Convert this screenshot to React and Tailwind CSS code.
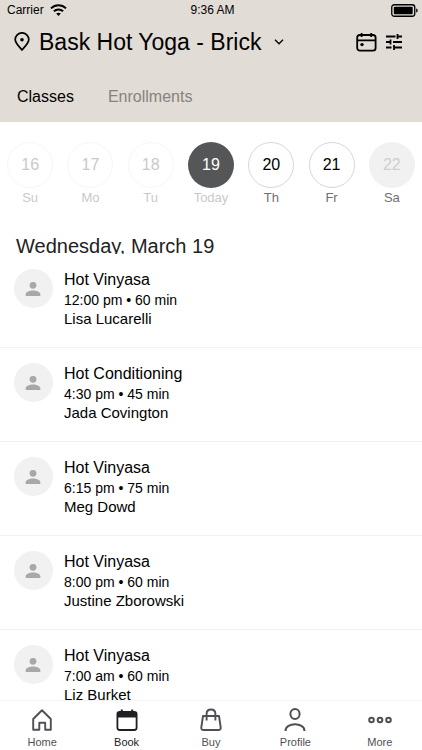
import { useState } from "react";

const days = [
  { date: 16, label: "Su", state: "past" },
  { date: 17, label: "Mo", state: "past" },
  { date: 18, label: "Tu", state: "past" },
  { date: 19, label: "Today", state: "today" },
  { date: 20, label: "Th", state: "open" },
  { date: 21, label: "Fr", state: "open" },
  { date: 22, label: "Sa", state: "closed" },
];

const circleStyles = {
  past: "border border-[#f6f6f6] text-[#c9c9c9]",
  today: "bg-[#555658] text-white font-medium",
  open: "border border-[#d6d6d6] text-black font-medium",
  closed: "bg-[#f1f1f1] text-[#cfcfcf]",
};

const labelStyles = {
  past: "text-[#c9c9c9]",
  today: "text-[#c9c9c9]",
  open: "text-[#6f6f6f]",
  closed: "text-[#6f6f6f]",
};

const classes = [
  { name: "Hot Vinyasa", time: "12:00 pm", length: "60 min", teacher: "Lisa Lucarelli" },
  { name: "Hot Conditioning", time: "4:30 pm", length: "45 min", teacher: "Jada Covington" },
  { name: "Hot Vinyasa", time: "6:15 pm", length: "75 min", teacher: "Meg Dowd" },
  { name: "Hot Vinyasa", time: "8:00 pm", length: "60 min", teacher: "Justine Zborowski" },
  { name: "Hot Vinyasa", time: "7:00 am", length: "60 min", teacher: "Liz Burket" },
];

const WifiIcon = () => (
  <svg width="17" height="12" viewBox="0 0 17 12" fill="none" stroke="black" strokeWidth="2">
    <path d="M1 4.4C5.2.3 11.8.3 16 4.4" />
    <path d="M3.9 7.3c2.6-2.5 6.6-2.5 9.2 0" />
    <path d="M8.5 12 6.2 9.6c1.3-1.2 3.3-1.2 4.6 0z" fill="black" stroke="none" />
  </svg>
);

const BatteryIcon = () => (
  <svg width="27" height="13" viewBox="0 0 27 13">
    <rect x=".75" y=".75" width="23" height="11.5" rx="2.5" fill="none" stroke="black" strokeWidth="1.3" />
    <rect x="2.8" y="2.8" width="18.9" height="7.4" rx="1" fill="black" />
    <path d="M25.2 4.5c2 .6 2 3.4 0 4z" fill="black" />
  </svg>
);

const PinIcon = () => (
  <svg width="16" height="20" viewBox="0 0 16 20" fill="none" stroke="black" strokeWidth="1.7">
    <path d="M8 18C4.5 14.2 1.2 11 1.2 7.6a6.8 6.8 0 0 1 13.6 0C14.8 11 11.5 14.2 8 18z" strokeLinejoin="round" />
    <circle cx="8" cy="7.7" r="1.8" fill="black" stroke="none" />
  </svg>
);

const CalendarIcon = () => (
  <svg width="21" height="20" viewBox="0 0 21 20" fill="none" stroke="black" strokeWidth="1.8">
    <rect x="1.2" y="3" width="18.4" height="15.6" rx="2.6" />
    <path d="M1.2 8.4h18.4M5.6 1v4M15.2 1v4" />
    <circle cx="6" cy="12.6" r="1.7" fill="black" stroke="none" />
  </svg>
);

const FilterIcon = () => (
  <svg width="18" height="18" viewBox="0 0 18 18" fill="none" stroke="black" strokeWidth="1.8">
    <path d="M1 3.5h9.5M12.5 1v5M12.5 3.5H17M1 9h4.5M5.5 6.5v5M8 9h9M1 14.5h5.5M9 12v5M9 14.5h8" />
  </svg>
);

const PersonIcon = () => (
  <svg width="17" height="16" viewBox="0 0 17 16" fill="#a8a8a8">
    <circle cx="8" cy="4.3" r="3.4" />
    <path d="M.7 15v-1.8C.7 10.6 5 9.4 8 9.4s7.3 1.2 7.3 3.8V15z" />
  </svg>
);

const HomeIcon = () => (
  <svg width="24" height="24" viewBox="0 0 24 24" fill="none" stroke="currentColor" strokeWidth="1.9" strokeLinejoin="round">
    <path d="M3.2 11 12 2.3l8.8 8.7v10.8h-5.6v-7H9.3v7H3.2z" />
  </svg>
);

const BookIcon = () => (
  <svg width="24" height="24" viewBox="0 0 24 24" fill="none" stroke="currentColor" strokeWidth="1.8">
    <rect x="2.4" y="4" width="19.2" height="18" rx="2.2" />
    <path d="M2.4 4h19.2v5.5H2.4z" fill="currentColor" stroke="none" />
    <path d="M6.8 1.5v4M17.2 1.5v4" strokeWidth="2" />
  </svg>
);

const BuyIcon = () => (
  <svg width="24" height="24" viewBox="0 0 24 24" fill="none" stroke="currentColor" strokeWidth="1.9" strokeLinejoin="round">
    <path d="M4 8h16l1.7 11.5q.2 2.5-2.2 2.5h-15q-2.4 0-2.2-2.5z" />
    <path d="M7.6 12.5V6q0-4.5 4.4-4.5T16.4 6v6.5" />
  </svg>
);

const ProfileIcon = () => (
  <svg width="24" height="24" viewBox="0 0 24 24" fill="none" stroke="currentColor" strokeWidth="2">
    <ellipse cx="12" cy="6" rx="4.6" ry="4.9" />
    <path d="M2.5 23c0-9 19-9 19 0" />
  </svg>
);

const MoreIcon = () => (
  <svg width="24" height="24" viewBox="0 0 24 24" fill="none" stroke="currentColor" strokeWidth="2">
    <circle cx="3.5" cy="12" r="2.3" />
    <circle cx="12" cy="12" r="2.3" />
    <circle cx="20.5" cy="12" r="2.3" />
  </svg>
);

const tabs = [
  { name: "Home", Icon: HomeIcon },
  { name: "Book", Icon: BookIcon },
  { name: "Buy", Icon: BuyIcon },
  { name: "Profile", Icon: ProfileIcon },
  { name: "More", Icon: MoreIcon },
];

const App = () => {
  const [tab, setTab] = useState("Book");
  const [view, setView] = useState("Classes");

  return (
    <div className="h-screen w-full bg-white flex flex-col overflow-hidden text-black font-['Liberation_Sans',Arial,sans-serif]">
      <header className="bg-[#e1dcd6] shrink-0">
        {/* Status bar */}
        <div className="grid grid-cols-3 items-center h-5 pl-[7px] pr-1 text-xs">
          <div className="flex items-center gap-[6px]">
            <span>Carrier</span>
            <WifiIcon />
          </div>
          <span className="text-center">9:36 AM</span>
          <div className="flex justify-end">
            <BatteryIcon />
          </div>
        </div>

        {/* Location */}
        <div className="flex items-center h-11 pl-[14px] pr-[19px]">
          <button type="button" className="flex items-center">
            <PinIcon />
            <span className="ml-[9px] text-[23px]">Bask Hot Yoga - Brick</span>
            <svg className="ml-[13px]" width="10" height="6" viewBox="0 0 10 6" fill="none" stroke="black" strokeWidth="1.3">
              <path d="M1 .8 5 4.8 9 .8" />
            </svg>
          </button>
          <div className="ml-auto flex items-center gap-2">
            <button type="button" aria-label="Calendar">
              <CalendarIcon />
            </button>
            <button type="button" aria-label="Filters">
              <FilterIcon />
            </button>
          </div>
        </div>

        {/* Classes / Enrollments */}
        <div className="flex items-center gap-[34px] h-[58px] px-[17px] pt-2">
          {["Classes", "Enrollments"].map((name) => (
            <button
              key={name}
              type="button"
              onClick={() => setView(name)}
              className={view === name ? "text-black" : "text-[#86827e]"}
            >
              {name}
            </button>
          ))}
        </div>
      </header>

      {/* Week */}
      <div className="grid grid-cols-7 pt-5 shrink-0">
        {days.map((day) => (
          <button key={day.date} type="button" className="flex flex-col items-center">
            <span className={`flex items-center justify-center size-[46px] rounded-full ${circleStyles[day.state]}`}>
              {day.date}
            </span>
            <span className={`mt-[2px] text-[13px] leading-4 ${labelStyles[day.state]}`}>{day.label}</span>
          </button>
        ))}
      </div>

      {/* Schedule */}
      <main className="flex-1 min-h-0 overflow-hidden pt-7">
        <h1 className="h-5 px-4 text-xl leading-6 text-[#222] overflow-hidden">Wednesday, March 19</h1>
        <ul>
          {classes.map((item, i) => (
            <li key={i} className="flex gap-[11px] h-[94px] pl-[14px] pt-[15px] border-b border-[#f2f2f2]">
              <span className="flex items-center justify-center size-[39px] rounded-full bg-[#f1f1f1]">
                <PersonIcon />
              </span>
              <div>
                <h2 className="text-base leading-[22px]">{item.name}</h2>
                <p className="text-sm leading-[18px]">
                  {item.time} • {item.length}
                </p>
                <p className="text-[15px] leading-5">{item.teacher}</p>
              </div>
            </li>
          ))}
        </ul>
      </main>

      {/* Bottom tabs */}
      <nav className="grid grid-cols-5 h-[50px] shrink-0 bg-white border-t border-[#f4f4f4]">
        {tabs.map(({ name, Icon }) => (
          <button
            key={name}
            type="button"
            onClick={() => setTab(name)}
            className={`flex flex-col items-center pt-[7px] ${tab === name ? "text-[#1f2023]" : "text-[#4f5055]"}`}
          >
            <Icon />
            <span className="text-[11px] leading-5">{name}</span>
          </button>
        ))}
      </nav>
    </div>
  );
};

export default App;
